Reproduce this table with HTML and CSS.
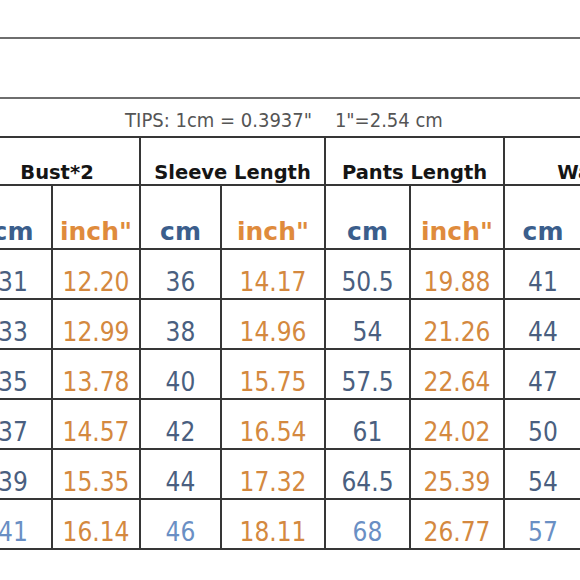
FILE: index.html
```html
<!DOCTYPE html>
<html lang="en">
<head>
<meta charset="utf-8">
<title>Size chart</title>
<link rel="stylesheet" href="styles.css">
</head>
<body>
<div class="sheet">
  <div class="rule blank"></div>
  <div class="rule tips">TIPS: 1cm = 0.3937"&nbsp;&nbsp;&nbsp;&nbsp;1"=2.54 cm</div>
  <div class="chart">
    <div class="cell head span2">Bust*2</div>
    <div class="cell head span2">Sleeve Length</div>
    <div class="cell head span2">Pants Length</div>
    <div class="cell head span2">Waist</div>

    <div class="cell unit cm">cm</div><div class="cell unit in">inch"</div>
    <div class="cell unit cm">cm</div><div class="cell unit in">inch"</div>
    <div class="cell unit cm">cm</div><div class="cell unit in">inch"</div>
    <div class="cell unit cm">cm</div><div class="cell unit in">inch"</div>

    <div class="cell val cm">31</div><div class="cell val in">12.20</div>
    <div class="cell val cm">36</div><div class="cell val in">14.17</div>
    <div class="cell val cm">50.5</div><div class="cell val in">19.88</div>
    <div class="cell val cm">41</div><div class="cell val in">16.14</div>

    <div class="cell val cm">33</div><div class="cell val in">12.99</div>
    <div class="cell val cm">38</div><div class="cell val in">14.96</div>
    <div class="cell val cm">54</div><div class="cell val in">21.26</div>
    <div class="cell val cm">44</div><div class="cell val in">17.32</div>

    <div class="cell val cm">35</div><div class="cell val in">13.78</div>
    <div class="cell val cm">40</div><div class="cell val in">15.75</div>
    <div class="cell val cm">57.5</div><div class="cell val in">22.64</div>
    <div class="cell val cm">47</div><div class="cell val in">18.50</div>

    <div class="cell val cm">37</div><div class="cell val in">14.57</div>
    <div class="cell val cm">42</div><div class="cell val in">16.54</div>
    <div class="cell val cm">61</div><div class="cell val in">24.02</div>
    <div class="cell val cm">50</div><div class="cell val in">19.69</div>

    <div class="cell val cm">39</div><div class="cell val in">15.35</div>
    <div class="cell val cm">44</div><div class="cell val in">17.32</div>
    <div class="cell val cm">64.5</div><div class="cell val in">25.39</div>
    <div class="cell val cm">54</div><div class="cell val in">21.26</div>

    <div class="cell val cm light">41</div><div class="cell val in">16.14</div>
    <div class="cell val cm light">46</div><div class="cell val in">18.11</div>
    <div class="cell val cm light">68</div><div class="cell val in">26.77</div>
    <div class="cell val cm light">57</div><div class="cell val in">22.44</div>
  </div>
</div>
</body>
</html>
```

FILE: styles.css
```css
html, body {
  margin: 0;
  padding: 0;
  background: #ffffff;
  overflow: hidden;
}

.sheet {
  width: 580px;
  height: 580px;
  padding-top: 37px;
  box-sizing: border-box;
  overflow: hidden;
}

.rule {
  border-top: 2px solid #6e6e6e;
}

.blank {
  height: 58px;
}

.tips {
  height: 33px;
  padding-bottom: 4px;
  padding-right: 12px;
  display: flex;
  align-items: flex-end;
  justify-content: center;
  font-family: "DejaVu Sans Condensed", "DejaVu Sans", sans-serif;
  font-stretch: condensed;
  font-size: 20px;
  line-height: 24px;
  color: #555555;
}

.chart {
  display: grid;
  grid-template-columns: 76px 86px 79px 102px 83px 92px 76px 88px;
  grid-template-rows: 46px 62px repeat(6, 48px);
  gap: 2px;
  padding: 2px;
  width: max-content;
  margin-left: -27px;
  background: #363636;
}

.cell {
  background: #ffffff;
  display: flex;
  align-items: flex-end;
  justify-content: center;
  white-space: nowrap;
}

.span2 {
  grid-column: span 2;
}

.head {
  font-family: "DejaVu Sans", sans-serif;
  font-weight: bold;
  font-size: 19.5px;
  line-height: 22px;
  color: #151515;
}

.unit {
  font-family: "DejaVu Sans", sans-serif;
  font-weight: bold;
  font-size: 25px;
  line-height: 28px;
  padding-bottom: 2px;
}

.unit.cm {
  color: #3b5e8c;
}

.unit.in {
  color: #df8b3c;
}

.val {
  font-family: "DejaVu Sans Condensed", "DejaVu Sans", sans-serif;
  font-stretch: condensed;
  font-size: 26px;
  line-height: 30px;
  padding-bottom: 1px;
}

.val.cm {
  color: #4a5f80;
}

.val.cm.light {
  color: #6a8fc4;
}

.val.in {
  color: #d4893f;
}
```
